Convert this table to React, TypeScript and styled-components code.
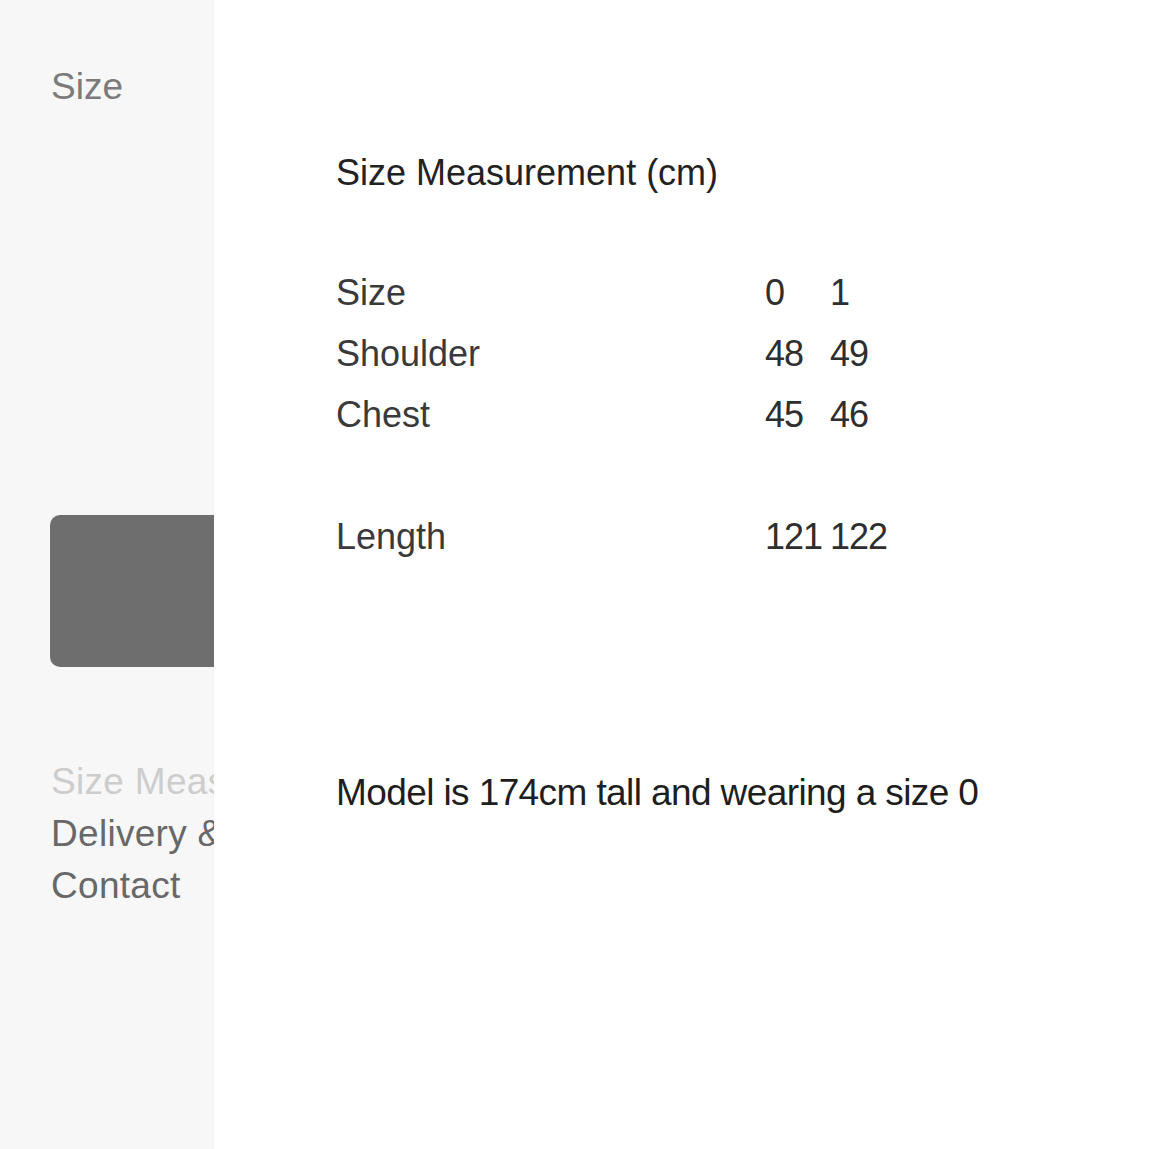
import styled, { createGlobalStyle } from "styled-components"

const GlobalStyle = createGlobalStyle`
    html, body {
        margin: 0;
        padding: 0;
        background: #ffffff;
    }
    body {
        font-family: "Liberation Sans", Arial, sans-serif;
    }
`

const rows = [
    { label: "Size", values: ["0", "1"] },
    { label: "Shoulder", values: ["48", "49"] },
    { label: "Chest", values: ["45", "46"] },
    { label: "", values: ["", ""] },
    { label: "Length", values: ["121", "122"] },
]

export default function App() {
    return (
        <Page>
            <GlobalStyle />
            <Sidebar>
                <SideTitle>Size</SideTitle>
                <Swatch />
                <SideNav>
                    <NavItem $faded>Size Measurement</NavItem>
                    <NavItem>Delivery &amp; Returns</NavItem>
                    <NavItem>Contact</NavItem>
                </SideNav>
            </Sidebar>
            <Modal>
                <Title>Size Measurement (cm)</Title>
                <Table>
                    {rows.map((row, i) => (
                        <Row key={i}>
                            <Label>{row.label}</Label>
                            <Value>{row.values[0]}</Value>
                            <Value>{row.values[1]}</Value>
                        </Row>
                    ))}
                </Table>
                <Note>Model is 174cm tall and wearing a size 0</Note>
            </Modal>
        </Page>
    )
}

const Page = styled.div`
    display: flex;
    flex-direction: row;
    width: 100%;
    height: 1149px;
    overflow: hidden;
`

const Sidebar = styled.div`
    width: 214px;
    flex-shrink: 0;
    overflow: hidden;
    background-color: #f7f7f7;
    padding-left: 51px;
    box-sizing: border-box;
    display: flex;
    flex-direction: column;
`

const SideTitle = styled.div`
    margin-top: 65px;
    font-size: 37px;
    line-height: 44px;
    color: #7b7b7b;
    white-space: nowrap;
`

const Swatch = styled.div`
    margin-top: 406px;
    margin-left: -1px;
    width: 300px;
    height: 152px;
    border-radius: 10px;
    background-color: #6e6e6e;
    flex-shrink: 0;
`

const SideNav = styled.div`
    margin-top: 89px;
    display: flex;
    flex-direction: column;
`

const NavItem = styled.div<{ $faded?: boolean }>`
    font-size: 37px;
    line-height: 52px;
    white-space: nowrap;
    letter-spacing: 0.3px;
    color: ${(p) => (p.$faded ? "#cdcdcd" : "#686868")};
`

const Modal = styled.div`
    flex: 1;
    background-color: #ffffff;
    padding: 151px 0 0 122px;
    display: flex;
    flex-direction: column;
`

const Title = styled.div`
    font-size: 36px;
    line-height: 44px;
    color: #222222;
`

const Table = styled.div`
    margin-top: 67px;
    display: flex;
    flex-direction: column;
`

const Row = styled.div`
    display: grid;
    grid-template-columns: 429px auto auto;
    justify-content: start;
    height: 61px;
    align-items: center;
    font-size: 36px;
    color: #2e2e2e;
`

const Label = styled.div`
    white-space: nowrap;
    color: #3a3a3a;
`

const Value = styled.div`
    white-space: nowrap;
    min-width: 57px;
    padding-right: 8px;
    letter-spacing: -1px;
`

const Note = styled.div`
    margin-top: 204px;
    font-size: 37px;
    line-height: 44px;
    letter-spacing: -0.6px;
    color: #1e1e1e;
    white-space: nowrap;
`
